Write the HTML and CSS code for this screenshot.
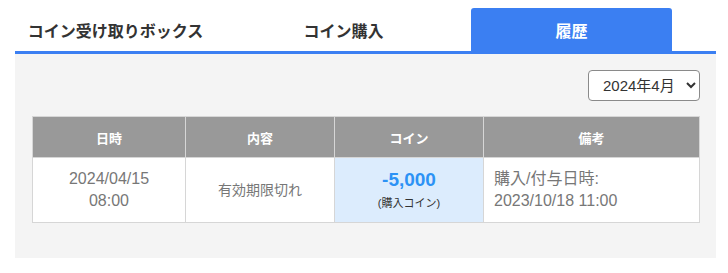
FILE: index.html
```html
<!DOCTYPE html>
<html lang="ja">
<head>
    <meta charset="UTF-8">
    <meta name="viewport" content="width=device-width, initial-scale=1.0">
    <title>コイン履歴</title>
    <link rel="stylesheet" href="styles.css">
</head>
<body>
    <div class="wrap">
        <div class="tabs">
            <a href="#box" class="tab">コイン受け取りボックス</a>
            <a href="#buy" class="tab">コイン購入</a>
            <a href="#history" class="tab active">履歴</a>
        </div>

        <div class="panel" id="history">
            <div class="filter">
                <select class="month">
                    <option>2024年4月</option>
                    <option>2024年3月</option>
                    <option>2024年2月</option>
                </select>
            </div>

            <table class="history">
                <thead>
                    <tr>
                        <th class="c-date">日時</th>
                        <th class="c-what">内容</th>
                        <th class="c-coin">コイン</th>
                        <th class="c-note">備考</th>
                    </tr>
                </thead>
                <tbody>
                    <tr>
                        <td class="c-date">2024/04/15<br>08:00</td>
                        <td class="c-what">有効期限切れ</td>
                        <td class="c-coin">
                            <div class="amount">-5,000</div>
                            <div class="kind">(購入コイン)</div>
                        </td>
                        <td class="c-note">購入/付与日時:<br>2023/10/18 11:00</td>
                    </tr>
                </tbody>
            </table>
        </div>
    </div>
</body>
</html>
```

FILE: styles.css
```css
body {
    margin: 0;
    background: #fff;
    font-family: "Liberation Sans", "Noto Sans CJK JP", sans-serif;
    color: #333;
}
.wrap {
    padding: 8px 12px 0 15px;
}
.tabs {
    display: flex;
    gap: 27px;
    border-bottom: 3px solid #3b7ff2;
}
.tab {
    width: 201px;
    height: 43px;
    display: flex;
    align-items: center;
    justify-content: center;
    font-size: 16px;
    font-weight: bold;
    color: #333;
    text-decoration: none;
    border-radius: 3px 3px 0 0;
}
.tab.active {
    background: #3b7ff2;
    color: #fff;
}
.panel {
    background: #f4f4f4;
    padding: 16px 16px 35px 17px;
}
.filter {
    display: flex;
    justify-content: flex-end;
    margin-bottom: 15px;
}
.month {
    width: 112px;
    height: 31px;
    font-family: inherit;
    font-size: 15px;
    color: #333;
    background: #fff;
    border: 1px solid #8a8a8a;
    border-radius: 4px;
    padding: 0 0 0 10px;
}
.history {
    width: 100%;
    border-collapse: collapse;
    background: #fff;
    table-layout: fixed;
}
.history th, .history td {
    border: 1px solid #d6d6d6;
    text-align: center;
}
.history th {
    background: #999;
    color: #fff;
    font-size: 13px;
    font-weight: bold;
    height: 40px;
    padding: 0;
}
.history td {
    height: 64px;
    padding: 0 10px;
    color: #777;
    font-size: 16px;
    line-height: 22px;
}
.history .c-date { width: 152px; }
.history .c-what { width: 148px; }
.history .c-coin { width: 148px; }
.history td.c-what {
    font-size: 14px;
}
.history td.c-coin {
    background: #dcecfd;
}
.history td.c-note {
    text-align: left;
}
.amount {
    color: #2c92f5;
    font-size: 19px;
    font-weight: bold;
    line-height: 24px;
}
.kind {
    color: #333;
    font-size: 11px;
    line-height: 18px;
    margin-top: 2px;
}
```
